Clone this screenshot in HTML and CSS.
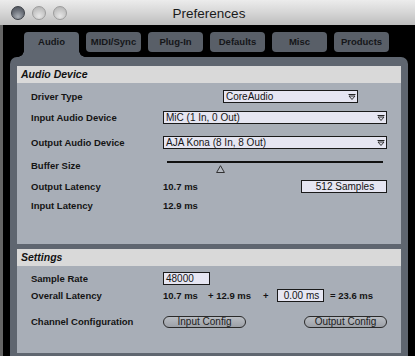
FILE: index.html
```html
<!DOCTYPE html>
<html lang="en">
<head>
    <meta charset="UTF-8">
    <title>Preferences</title>
    <link rel="stylesheet" href="styles.css">
</head>
<body>
    <div class="window">
        <div class="titlebar">
            <div class="lights">
                <span class="light close"></span>
                <span class="light"></span>
                <span class="light"></span>
            </div>
            <div class="title">Preferences</div>
            <div class="spacer"></div>
        </div>
        <div class="frame">
            <div class="tabs">
                <div class="tab active">Audio</div>
                <div class="tab">MIDI/Sync</div>
                <div class="tab">Plug-In</div>
                <div class="tab">Defaults</div>
                <div class="tab">Misc</div>
                <div class="tab">Products</div>
            </div>
            <div class="panel">
                <div class="section">
                    <div class="section-head">Audio Device</div>
                    <div class="section-body audio">
                        <div class="row">
                            <span class="label">Driver Type</span>
                            <div class="box select driver">
                                <span>CoreAudio</span>
                                <svg class="arrow" width="8" height="6" viewBox="0 0 8 6"><path d="M0.5 0.5H7.5" stroke="#222" stroke-width="1"/><path d="M1 2H7L4 5.5Z" fill="#d9d9e3" stroke="#222" stroke-width="0.9"/></svg>
                            </div>
                        </div>
                        <div class="row gap-input">
                            <span class="label">Input Audio Device</span>
                            <div class="box select wide">
                                <span>MiC (1 In, 0 Out)</span>
                                <svg class="arrow" width="8" height="6" viewBox="0 0 8 6"><path d="M0.5 0.5H7.5" stroke="#222" stroke-width="1"/><path d="M1 2H7L4 5.5Z" fill="#d9d9e3" stroke="#222" stroke-width="0.9"/></svg>
                            </div>
                        </div>
                        <div class="row gap-output">
                            <span class="label">Output Audio Device</span>
                            <div class="box select wide">
                                <span>AJA Kona (8 In, 8 Out)</span>
                                <svg class="arrow" width="8" height="6" viewBox="0 0 8 6"><path d="M0.5 0.5H7.5" stroke="#222" stroke-width="1"/><path d="M1 2H7L4 5.5Z" fill="#d9d9e3" stroke="#222" stroke-width="0.9"/></svg>
                            </div>
                        </div>
                        <div class="row slider-row">
                            <span class="label">Buffer Size</span>
                            <div class="slider">
                                <div class="track"></div>
                                <svg class="thumb" width="9" height="8" viewBox="0 0 9 8"><path d="M4.5 0.7L8.4 7.5H0.6Z" fill="#b4b9c1" stroke="#222" stroke-width="0.9"/></svg>
                            </div>
                        </div>
                        <div class="row gap-latency">
                            <span class="label">Output Latency</span>
                            <span class="value">10.7 ms</span>
                            <div class="box samples">512 Samples</div>
                        </div>
                        <div class="row gap-input-latency">
                            <span class="label">Input Latency</span>
                            <span class="value">12.9 ms</span>
                        </div>
                    </div>
                </div>
                <div class="section">
                    <div class="section-head">Settings</div>
                    <div class="section-body settings">
                        <div class="row">
                            <span class="label">Sample Rate</span>
                            <div class="box rate">48000</div>
                        </div>
                        <div class="row gap-overall">
                            <span class="label">Overall Latency</span>
                            <span class="value out-lat">10.7 ms</span>
                            <span class="value in-lat">+ 12.9 ms</span>
                            <span class="value plus">+</span>
                            <div class="box extra">0.00 ms</div>
                            <span class="value total">= 23.6 ms</span>
                        </div>
                        <div class="row gap-channel">
                            <span class="label">Channel Configuration</span>
                            <div class="pill">Input Config</div>
                            <div class="pill right">Output Config</div>
                        </div>
                    </div>
                </div>
            </div>
        </div>
    </div>
</body>
</html>
```

FILE: styles.css
```css
body {
    margin: 0;
    width: 415px;
    height: 356px;
    overflow: hidden;
    background-color: #000;
    font-family: "Liberation Sans", Arial, sans-serif;
}
.window {
    width: 418px;
}
.titlebar {
    height: 25px;
    display: flex;
    align-items: center;
    background: linear-gradient(#ececec, #d6d6d6 50%, #bdbdbd);
}
.lights {
    display: flex;
    gap: 7px;
    padding-left: 11px;
    width: 56px;
}
.light {
    width: 12px;
    height: 12px;
    border-radius: 50%;
    border: 1px solid #9c9c9c;
    background: radial-gradient(circle at 50% 75%, #e6e6e6, #c4c4c4 60%, #b0b0b0);
}
.light.close {
    border-color: #3c4047;
    background: radial-gradient(circle at 50% 80%, #a9aeb5, #6b7079 55%, #4a4e55);
}
.title {
    flex: 1;
    text-align: center;
    font-size: 13.5px;
    color: #1a1a1a;
    padding-top: 1px;
}
.spacer {
    width: 67px;
}
.frame {
    height: 331px;
    box-sizing: border-box;
    background-color: #000;
    border-left: 3px solid #666;
    border-right: 3px solid #666;
    padding-top: 7px;
}
.tabs {
    display: flex;
    align-items: flex-start;
    gap: 7px;
    height: 25px;
    margin-left: 21px;
}
.tab {
    width: 55px;
    height: 20px;
    line-height: 20px;
    text-align: center;
    background-color: #595f68;
    border-radius: 4px;
    font-size: 9.5px;
    font-weight: bold;
    color: #151619;
}
.tab.active {
    position: relative;
    height: 25px;
    background-color: #5f6670;
    border-radius: 4px 4px 0 0;
}
.tab.active::before,
.tab.active::after {
    content: "";
    position: absolute;
    bottom: 0;
    width: 6px;
    height: 6px;
}
.tab.active::before {
    left: -6px;
    background: radial-gradient(circle at 0 0, transparent 5.5px, #5f6670 6px);
}
.tab.active::after {
    right: -6px;
    background: radial-gradient(circle at 100% 0, transparent 5.5px, #5f6670 6px);
}
.panel {
    margin: 0 7px;
    padding: 9px 7px 3px;
    background-color: #5f6670;
    border-radius: 7px 7px 0 0;
}
.section + .section {
    margin-top: 5px;
}
.section-head {
    height: 17px;
    line-height: 17px;
    padding-left: 4px;
    background-color: #d9d9d9;
    font-size: 10.5px;
    font-weight: bold;
    font-style: italic;
    color: #111;
}
.section-body {
    box-sizing: border-box;
    background-color: #a8aeb7;
    padding: 7px 14px 0;
}
.section-body.audio {
    height: 161px;
}
.section-body.settings {
    height: 87px;
    padding-top: 6px;
}
.row {
    display: flex;
    align-items: center;
    height: 13px;
    font-size: 9.5px;
    color: #141414;
}
.gap-input { margin-top: 8px; }
.gap-output { margin-top: 12px; }
.slider-row { margin-top: 9px; height: 14px; }
.gap-latency { margin-top: 8px; }
.gap-input-latency { margin-top: 6px; }
.gap-overall { margin-top: 4px; }
.gap-channel { margin-top: 13px; }
.label {
    width: 132px;
    flex-shrink: 0;
    font-weight: bold;
}
.value {
    font-weight: bold;
}
.box {
    box-sizing: border-box;
    height: 13px;
    line-height: 11px;
    padding-left: 2px;
    background-color: #e6e6f2;
    border: 1px solid #1a1a1a;
    font-size: 10px;
    color: #151515;
}
.select {
    display: flex;
    align-items: center;
    justify-content: space-between;
    padding-right: 1px;
}
.select .arrow {
    margin-top: 1px;
}
.driver {
    width: 135px;
    margin-left: 60px;
}
.wide {
    flex: 1;
}
.samples {
    width: 86px;
    margin-left: auto;
    text-align: center;
}
.rate {
    width: 47px;
}
.slider {
    position: relative;
    flex: 1;
    height: 14px;
    margin: 0 4px;
}
.track {
    margin-top: 3px;
    border-top: 2px solid #111;
}
.thumb {
    position: absolute;
    left: 49px;
    top: 7px;
}
.out-lat { width: 45px; }
.in-lat { width: 55px; }
.plus { width: 14px; }
.extra {
    width: 47px;
    text-align: center;
    margin-right: 6px;
}
.pill {
    box-sizing: border-box;
    width: 83px;
    height: 12px;
    line-height: 10px;
    text-align: center;
    border: 1px solid #2a2a2a;
    border-radius: 6px;
    background: linear-gradient(#b9bdc3, #9ca0a7);
    font-size: 10px;
    color: #1c1c1c;
}
.pill.right {
    margin-left: auto;
}
```
